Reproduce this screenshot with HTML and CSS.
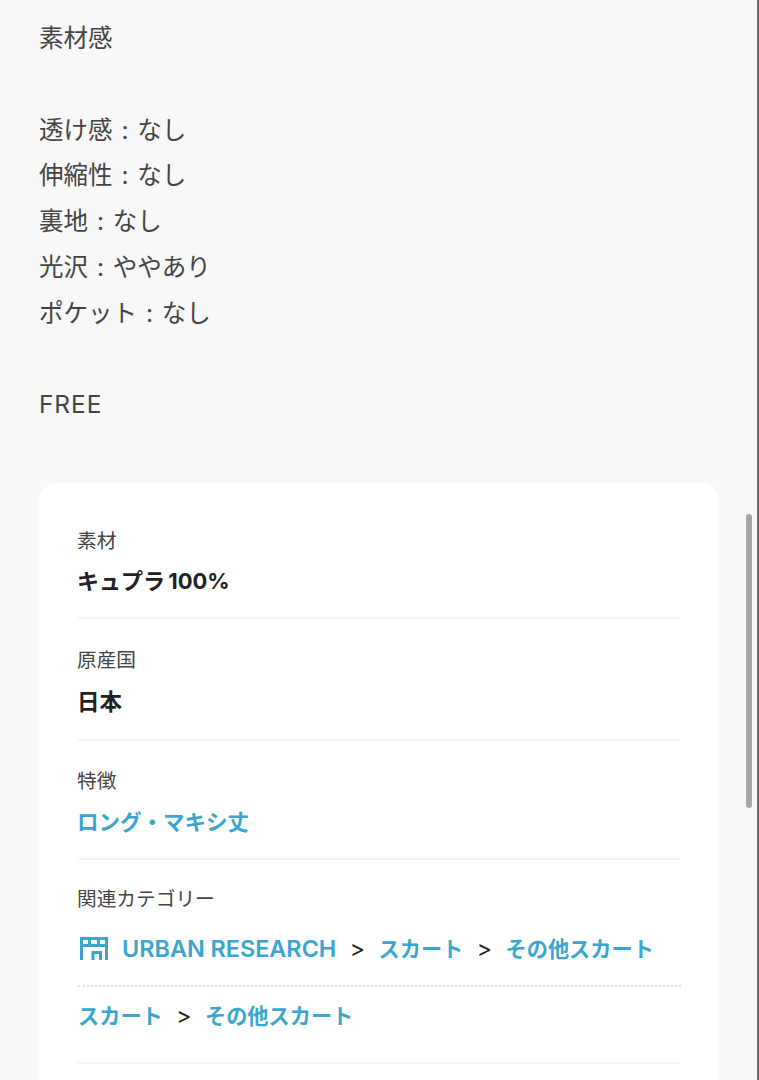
FILE: index.html
```html
<!DOCTYPE html>
<html lang="ja">
<head>
    <meta charset="UTF-8">
    <meta name="viewport" content="width=device-width, initial-scale=1.0">
    <title>商品詳細</title>
    <link rel="stylesheet" href="styles.css">
</head>
<body>
    <div class="page">
        <div class="description">
            <p>素材感</p>
            <p>&nbsp;</p>
            <p>透け感 : なし</p>
            <p>伸縮性 : なし</p>
            <p>裏地 : なし</p>
            <p>光沢 : ややあり</p>
            <p>ポケット : なし</p>
            <p>&nbsp;</p>
            <p class="latin">FREE</p>
        </div>

        <div class="card">
            <div class="row row-material">
                <div class="label">素材</div>
                <div class="value">キュプラ 100%</div>
            </div>
            <div class="row row-origin">
                <div class="label">原産国</div>
                <div class="value">日本</div>
            </div>
            <div class="row row-feature">
                <div class="label">特徴</div>
                <div class="value link">ロング・マキシ丈</div>
            </div>
            <div class="row row-category">
                <div class="label">関連カテゴリー</div>
                <div class="crumbs crumbs-brand">
                    <svg class="shop-icon" viewBox="0 0 28 23" width="28" height="23" fill="none" stroke="#3aa6cf" stroke-width="3">
                        <path d="M1.5 23V1.5H26.5V23"/>
                        <path d="M1.5 8.5H26.5"/>
                        <path d="M9.5 1.5V8.5M18.5 1.5V8.5"/>
                        <path d="M13 23V15.5H20.5V23"/>
                    </svg>
                    <span class="link brand">URBAN RESEARCH</span>
                    <span class="sep">&gt;</span>
                    <span class="link">スカート</span>
                    <span class="sep">&gt;</span>
                    <span class="link">その他スカート</span>
                </div>
                <div class="crumbs">
                    <span class="link">スカート</span>
                    <span class="sep">&gt;</span>
                    <span class="link">その他スカート</span>
                </div>
            </div>
        </div>
    </div>

    <div class="scrollbar"></div>
</body>
</html>
```

FILE: styles.css
```css
html, body {
    margin: 0;
    padding: 0;
    height: 1080px;
    overflow: hidden;
}

body {
    font-family: "Inter", "Noto Sans CJK JP", sans-serif;
    background-color: #f8f8f8;
    color: #444;
    border-right: 2px solid #6e6e6e;
    box-sizing: border-box;
}

.page {
    padding: 16px 38px 0 39px;
}

.description p {
    margin: 0;
    font-size: 24.5px;
    line-height: 45.75px;
    word-spacing: 2px;
}

.description .latin {
    letter-spacing: 0.9px;
}

.card {
    margin-top: 55px;
    padding: 39px 38px 0 39px;
    background-color: #fff;
    border-radius: 18px;
    height: 700px;
}

.row {
    border-bottom: 2px solid #f4f4f4;
}

.row-material { height: 95px; }
.row-origin { padding-top: 22px; height: 98px; }
.row-feature { padding-top: 21px; height: 96px; }
.row-category { padding-top: 20px; height: 182px; }

.label {
    margin-left: -1px;
    font-size: 19.7px;
    line-height: 38px;
    color: #444;
}

.value {
    margin-left: -1px;
    font-size: 22px;
    line-height: 44px;
    font-weight: 700;
    color: #222;
}

.row-material .value {
    margin-top: -1px;
    word-spacing: -2px;
}

.row-origin .value {
    margin-top: 1px;
    font-size: 22.5px;
}

.row-feature .value {
    font-size: 21.5px;
}

.link {
    color: #3aa6cf;
    font-weight: 700;
}

.crumbs {
    display: flex;
    align-items: center;
    font-size: 21.2px;
    line-height: 40px;
    height: 58px;
}

.crumbs-brand {
    height: 62px;
    padding-bottom: 5px;
    border-bottom: 2px dotted #e2e2e2;
}

.shop-icon {
    flex-shrink: 0;
    margin: 0 14px 0 2px;
}

.brand {
    font-size: 23.4px;
    font-weight: 600;
}

.sep {
    margin: 0 13.5px;
    font-size: 23px;
    color: #222;
}

.scrollbar {
    position: absolute;
    top: 514px;
    left: 746px;
    width: 6px;
    height: 294px;
    border-radius: 3px;
    background-color: #a6a6a6;
}
```
